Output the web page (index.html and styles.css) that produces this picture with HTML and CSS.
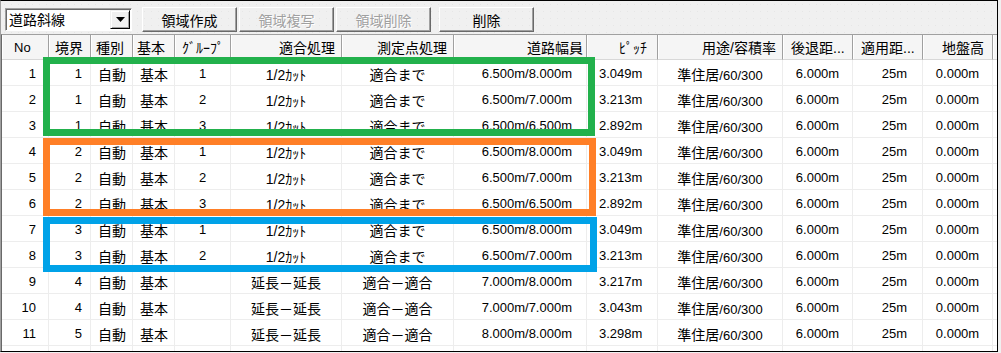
FILE: index.html
```html
<!DOCTYPE html>
<html lang="ja">
<head>
    <meta charset="UTF-8">
    <title>道路斜線 領域一覧</title>
    <link rel="stylesheet" href="styles.css">
</head>
<body>
    <div class="window">
        <div class="toolbar">
            <div class="combo">
                <span class="combo-text">道路斜線</span>
                <span class="combo-btn">
                    <svg width="9" height="5" viewBox="0 0 9 5"><polygon points="0,0 9,0 4.5,5" fill="#000"/></svg>
                </span>
            </div>
            <button class="btn first">領域作成</button>
            <button class="btn" disabled>領域複写</button>
            <button class="btn" disabled>領域削除</button>
            <button class="btn last">削除</button>
        </div>

        <div class="list">
            <table class="grid">
                <thead>
                    <tr>
                        <th>No</th>
                        <th>境界</th>
                        <th>種別</th>
                        <th>基本</th>
                        <th>ｸﾞﾙｰﾌﾟ</th>
                        <th>適合処理</th>
                        <th>測定点処理</th>
                        <th>道路幅員</th>
                        <th>ﾋﾟｯﾁ</th>
                        <th>用途/容積率</th>
                        <th>後退距...</th>
                        <th>適用距...</th>
                        <th>地盤高</th>
                        <th></th>
                    </tr>
                </thead>
                <tbody>
                    <tr><td>1</td><td>1</td><td>自動</td><td>基本</td><td>1</td><td>1/2ｶｯﾄ</td><td>適合まで</td><td>6.500m/8.000m</td><td>3.049m</td><td><span class="ja">準住居</span>/60/300</td><td>6.000m</td><td>25m</td><td>0.000m</td><td></td></tr>
                    <tr><td>2</td><td>1</td><td>自動</td><td>基本</td><td>2</td><td>1/2ｶｯﾄ</td><td>適合まで</td><td>6.500m/7.000m</td><td>3.213m</td><td><span class="ja">準住居</span>/60/300</td><td>6.000m</td><td>25m</td><td>0.000m</td><td></td></tr>
                    <tr><td>3</td><td>1</td><td>自動</td><td>基本</td><td>3</td><td>1/2ｶｯﾄ</td><td>適合まで</td><td>6.500m/6.500m</td><td>2.892m</td><td><span class="ja">準住居</span>/60/300</td><td>6.000m</td><td>25m</td><td>0.000m</td><td></td></tr>
                    <tr><td>4</td><td>2</td><td>自動</td><td>基本</td><td>1</td><td>1/2ｶｯﾄ</td><td>適合まで</td><td>6.500m/8.000m</td><td>3.049m</td><td><span class="ja">準住居</span>/60/300</td><td>6.000m</td><td>25m</td><td>0.000m</td><td></td></tr>
                    <tr><td>5</td><td>2</td><td>自動</td><td>基本</td><td>2</td><td>1/2ｶｯﾄ</td><td>適合まで</td><td>6.500m/7.000m</td><td>3.213m</td><td><span class="ja">準住居</span>/60/300</td><td>6.000m</td><td>25m</td><td>0.000m</td><td></td></tr>
                    <tr><td>6</td><td>2</td><td>自動</td><td>基本</td><td>3</td><td>1/2ｶｯﾄ</td><td>適合まで</td><td>6.500m/6.500m</td><td>2.892m</td><td><span class="ja">準住居</span>/60/300</td><td>6.000m</td><td>25m</td><td>0.000m</td><td></td></tr>
                    <tr><td>7</td><td>3</td><td>自動</td><td>基本</td><td>1</td><td>1/2ｶｯﾄ</td><td>適合まで</td><td>6.500m/8.000m</td><td>3.049m</td><td><span class="ja">準住居</span>/60/300</td><td>6.000m</td><td>25m</td><td>0.000m</td><td></td></tr>
                    <tr><td>8</td><td>3</td><td>自動</td><td>基本</td><td>2</td><td>1/2ｶｯﾄ</td><td>適合まで</td><td>6.500m/7.000m</td><td>3.213m</td><td><span class="ja">準住居</span>/60/300</td><td>6.000m</td><td>25m</td><td>0.000m</td><td></td></tr>
                    <tr><td>9</td><td>4</td><td>自動</td><td>基本</td><td></td><td>延長－延長</td><td>適合－適合</td><td>7.000m/8.000m</td><td>3.217m</td><td><span class="ja">準住居</span>/60/300</td><td>6.000m</td><td>25m</td><td>0.000m</td><td></td></tr>
                    <tr><td>10</td><td>4</td><td>自動</td><td>基本</td><td></td><td>延長－延長</td><td>適合－適合</td><td>7.000m/7.000m</td><td>3.043m</td><td><span class="ja">準住居</span>/60/300</td><td>6.000m</td><td>25m</td><td>0.000m</td><td></td></tr>
                    <tr><td>11</td><td>5</td><td>自動</td><td>基本</td><td></td><td>延長－延長</td><td>適合－適合</td><td>8.000m/8.000m</td><td>3.298m</td><td><span class="ja">準住居</span>/60/300</td><td>6.000m</td><td>25m</td><td>0.000m</td><td></td></tr>
                    <tr class="empty"><td></td><td></td><td></td><td></td><td></td><td></td><td></td><td></td><td></td><td></td><td></td><td></td><td></td><td></td></tr>
                </tbody>
            </table>

            <!-- 境界ごとの囲み -->
            <div class="mark green"></div>
            <div class="mark orange"></div>
            <div class="mark blue"></div>
        </div>
    </div>
</body>
</html>
```

FILE: styles.css
```css
html {
    background: #f0f0f0;
}
body {
    margin: 0;
    font-family: "Liberation Sans", "Noto Sans CJK JP", sans-serif;
    font-size: 13px;
    color: #000;
}
.window {
    width: 998px;
    height: 352px;
    box-sizing: border-box;
    border: 1px solid #000;
    border-left-color: #a0a0a0;
    background: #f0f0f0;
    display: flex;
    flex-direction: column;
}

/* toolbar */
.toolbar {
    height: 33px;
    flex: none;
    box-sizing: border-box;
    padding: 6px 0 0 4px;
    display: flex;
    align-items: flex-start;
    background-color: #f0f0f0;
    background-image: radial-gradient(#e6e6e6 0.7px, transparent 0.8px);
    background-size: 7px 7px;
}
.combo {
    margin-top: 1px;
    width: 127px;
    height: 23px;
    box-sizing: border-box;
    background: #fff;
    border: 1px solid;
    border-color: #a0a0a0 #fff #fff #a0a0a0;
    box-shadow: inset 1px 1px #696969;
    display: flex;
    align-items: center;
    justify-content: space-between;
    padding: 0 1px 0 3px;
}
.combo-text {
    font-size: 14px;
    line-height: 1;
}
.combo-btn {
    width: 20px;
    height: 19px;
    box-sizing: border-box;
    background: #f0f0f0;
    border: 1px solid;
    border-color: #f0f0f0 #000 #000 #f0f0f0;
    box-shadow: inset 1px 1px #fff, inset -1px -1px #a0a0a0;
    display: flex;
    align-items: center;
    justify-content: center;
}
.btn {
    width: 95px;
    height: 25px;
    margin-left: 2px;
    padding: 0;
    font-family: "Noto Sans CJK JP", sans-serif;
    font-size: 14px;
    color: #000;
    background: transparent;
    border: 1px solid;
    border-color: #fff #696969 #696969 #fff;
    box-shadow: inset -1px -1px #a0a0a0;
}
.btn.first {
    margin-left: 10px;
}
.btn.last {
    margin-left: 8px;
}
.btn:disabled {
    color: #a0a0a0;
    text-shadow: 1px 1px #fff;
}

/* list */
.list {
    flex: 1;
    position: relative;
    overflow: hidden;
    background: #fff;
    border-top: 1px solid #a0a0a0;
    border-left: 1px solid #696969;
}
.grid {
    width: 100%;
    table-layout: fixed;
    border-collapse: separate;
    border-spacing: 0;
}
.grid th,
.grid td {
    box-sizing: border-box;
    padding: 0;
    white-space: nowrap;
    overflow: hidden;
    font-weight: normal;
}
.grid th {
    height: 25px;
    font-size: 14px;
    text-align: left;
    background: #f5f5f5;
    border-right: 1px solid #a0a0a0;
    border-bottom: 1px solid #d8d8d8;
    box-shadow: inset 1px 0 #fff;
}
.grid th:last-child {
    border-right: none;
}
.grid td {
    height: 26px;
    padding-top: 2px;
    border-right: 1px solid #ededed;
    border-bottom: 1px solid #ededed;
}
.grid td:last-child {
    border-right: none;
}
.grid .ja {
    font-size: 14px;
}

/* column widths */
.grid th:nth-child(1) { width: 47px; font-size: 13px; padding-left: 12px; }
.grid th:nth-child(2) { width: 42px; padding-left: 6px; }
.grid th:nth-child(3) { width: 42px; padding-left: 5px; }
.grid th:nth-child(4) { width: 42px; padding-left: 4px; }
.grid th:nth-child(5) { width: 56px; padding-left: 7px; }
.grid th:nth-child(6) { width: 111px; text-align: right; padding-right: 6px; }
.grid th:nth-child(7) { width: 112px; text-align: right; padding-right: 6px; }
.grid th:nth-child(8) { width: 133px; text-align: right; padding-right: 3px; }
.grid th:nth-child(9) { width: 71px; text-align: right; padding-right: 10px; }
.grid th:nth-child(10) { width: 125px; text-align: right; padding-right: 6px; }
.grid th:nth-child(11) { width: 70px; padding-left: 8px; }
.grid th:nth-child(12) { width: 70px; padding-left: 8px; }
.grid th:nth-child(13) { width: 70px; text-align: right; padding-right: 8px; }

/* cell alignment */
.grid td:nth-child(1) { text-align: right; padding-right: 12px; }
.grid td:nth-child(2) { text-align: right; padding-right: 8px; }
.grid td:nth-child(3) { padding-left: 7px; font-size: 14px; }
.grid td:nth-child(4) { padding-left: 7px; font-size: 14px; }
.grid td:nth-child(5) { text-align: center; }
.grid td:nth-child(6) { text-align: center; font-size: 14px; }
.grid td:nth-child(7) { text-align: center; font-size: 14px; }
.grid td:nth-child(8) { text-align: right; padding-right: 14px; }
.grid td:nth-child(9) { padding-left: 12px; }
.grid td:nth-child(10) { text-align: center; }
.grid td:nth-child(11) { text-align: center; }
.grid td:nth-child(12) { text-align: right; padding-right: 15px; }
.grid td:nth-child(13) { text-align: center; }

/* highlight boxes */
.mark {
    position: absolute;
    left: 41px;
    box-sizing: border-box;
    border: 7px solid;
}
.green {
    top: 22px;
    width: 552px;
    height: 79px;
    border-color: #22b14c;
}
.orange {
    top: 103px;
    width: 553px;
    height: 78px;
    border-color: #ff7f27;
}
.blue {
    top: 182px;
    width: 554px;
    height: 55px;
    border-color: #00a2e8;
}
```
